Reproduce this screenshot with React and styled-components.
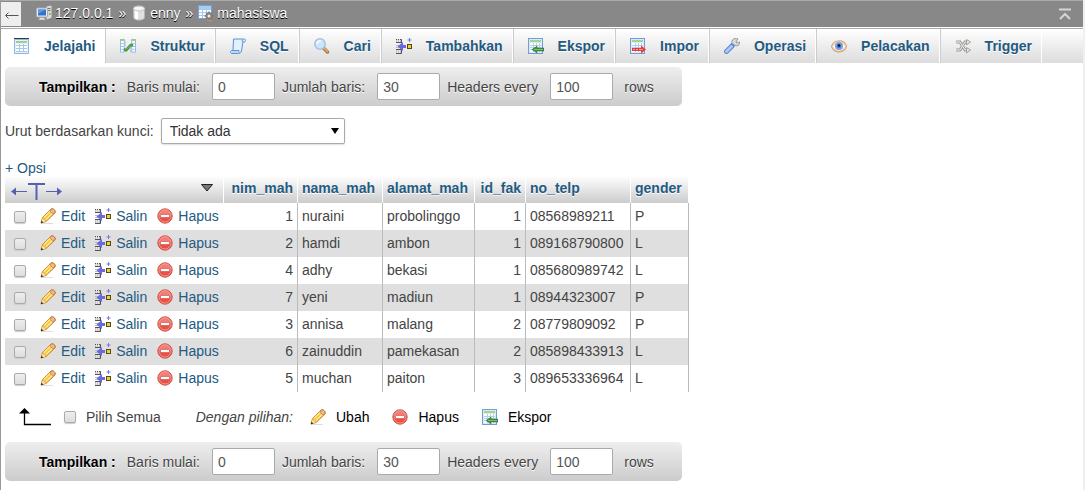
import React from "react";
import styled, { createGlobalStyle } from "styled-components";

const tabs = [
  { title: "Jelajahi", icon: "browse", active: true },
  { title: "Struktur", icon: "structure" },
  { title: "SQL", icon: "sql" },
  { title: "Cari", icon: "search" },
  { title: "Tambahkan", icon: "insert" },
  { title: "Ekspor", icon: "export" },
  { title: "Impor", icon: "import" },
  { title: "Operasi", icon: "wrench" },
  { title: "Pelacakan", icon: "eye" },
  { title: "Trigger", icon: "trigger" },
];

const columns = [
  { name: "nim_mah", width: 74, numeric: true },
  { name: "nama_mah", width: 85 },
  { name: "alamat_mah", width: 92 },
  { name: "id_fak", width: 51, numeric: true },
  { name: "no_telp", width: 105 },
  { name: "gender", width: 58 },
];

const students = [
  ["1", "nuraini", "probolinggo", "1", "08568989211", "P"],
  ["2", "hamdi", "ambon", "1", "089168790800", "L"],
  ["4", "adhy", "bekasi", "1", "085680989742", "L"],
  ["7", "yeni", "madiun", "1", "08944323007", "P"],
  ["3", "annisa", "malang", "2", "08779809092", "P"],
  ["6", "zainuddin", "pamekasan", "2", "085898433913", "L"],
  ["5", "muchan", "paiton", "3", "089653336964", "L"],
];

const sheet = (
  <>
    <rect x="0.5" y="0.5" width="14" height="15" fill="#dbe9f8" stroke="#6f9fd8" />
    <rect x="2" y="2" width="11" height="2" fill="#a5d38c" />
    <path d="M2 5h11v9H2z" fill="#fff" />
    <path d="M2 7.5h11M2 9.5h11M2 11.5h11M5.5 5v9M8.5 5v9M11.5 5v9" stroke="#b4cdea" />
  </>
);

const drawings = {
  server: (
    <>
      <path d="M10 1l5-1 1 1v12l-5 2-1-1z" fill="#d8d8d4" stroke="#777" strokeWidth=".7" />
      <path d="M11.5 3.5h3M11.5 5.5h3" stroke="#777" />
      <path d="M13 8h1.5v2H13z" fill="#68b94c" />
      <rect x="0.5" y="3" width="11" height="9" rx="1" fill="#e9eef5" stroke="#a3abb8" />
      <path d="M2 4.5h8v6H2z" fill="#3670c8" />
      <path d="M2 4.5h8L2 9z" fill="#5f97e0" />
      <path d="M4 12.5h4l1.5 2.5h-7z" fill="#e3e3e3" stroke="#999" strokeWidth=".6" />
    </>
  ),
  database: (
    <>
      <path d="M2.5 3.5v9c0 3.5 11 3.5 11 0v-9z" fill="#e0e0e0" stroke="#b5b5b5" />
      <path d="M4 5v8c1 1 2 1.5 3 1.500V6z" fill="#fff" />
      <ellipse cx="8" cy="3.5" rx="5.5" ry="2.5" fill="#f5f5f5" stroke="#c4c4c4" />
    </>
  ),
  table: (
    <>
      <rect x="0.5" y="0.5" width="13" height="13" fill="#fff" stroke="#73a3dc" />
      <path d="M1 1h12v3H1z" fill="#a9cdf0" />
      <path d="M1 4.5h12M1 7.5h12M1 10.5h12M4.5 4v9M8.500 4v9" stroke="#a8c8ea" />
      <path d="M11 6.500v9M6.500 11h9M8 8l6 6M14 8l-6 6" stroke="#777" strokeWidth="1.500" />
      <circle cx="11" cy="11" r="2.500" fill="#eee" stroke="#808080" strokeWidth="2" />
      <path d="M9 15.500h5" stroke="#dd8b42" />
    </>
  ),
  browse: (
    <>
      <path d="M.5 1.500h14v14H.5z" fill="#e6f0fb" stroke="#8fb5e2" />
      <path d="M0 .5h15" stroke="#303c4a" />
      <path d="M2 3h11v2H2z" fill="#9fd08a" />
      <path d="M2 6h11v8H2z" fill="#fff" />
      <path d="M2 7.500h11M2 10.500h11M2 13.500h11M5.500 6v8M9.500 6v8" stroke="#a8c7e9" />
    </>
  ),
  structure: (
    <>
      <path d="M.5 1.500h4v13h-4zM12.500 1.500h4v13h-4z" fill="#fff" stroke="#8eb8e4" />
      <path d="M0 1.500h5M12 1.500h5" stroke="#98ca83" strokeWidth="2" />
      <path d="M1 5.500h3M1 8.500h3M1 11.500h3M13 5.500h3M13 8.500h3M13 11.500h3" stroke="#9dbfe5" />
      <path d="M4 11.500l2.500 1 5-5.500h2.500" fill="none" stroke="#4f9744" strokeWidth="3" strokeLinejoin="round" />
      <path d="M6.500 12l5-5" stroke="#78bb66" />
      <path d="M5.500 2.500v6M11.500 9v6" stroke="#a6c6e9" />
    </>
  ),
  sql: (
    <>
      <path d="M3.500 1h10c3 0 3 3 .5 3h-1l-1.500 9c-.5 2-1.500 2.500-3 2.500H2c-2 0-2-3 0-3h1z" fill="#d9eafc" stroke="#5f94d3" />
      <path d="M4.500 2h7.500L10.500 12H4z" fill="#e3f0fe" />
      <path d="M13 1.500c-1 .5-1 2 0 2.500M2 12.500h7c-1 1 0 2.500 1 2.500" fill="none" stroke="#5f94d3" />
      <path d="M1.500 14h6" stroke="#9ec0ea" />
    </>
  ),
  search: (
    <>
      <path d="M10 10.500l3.500 3.500" stroke="#a87945" strokeWidth="3.500" strokeLinecap="round" />
      <path d="M10.500 10.500l3 3" stroke="#e1b478" strokeWidth="1.500" strokeLinecap="round" />
      <circle cx="6" cy="6" r="5.200" fill="#cfe4fb" stroke="#a3c1e8" strokeWidth="1.500" />
      <path d="M3 6c0-2 2-3.500 4-3" fill="none" stroke="#fff" strokeWidth="1.500" />
    </>
  ),
  insert: (
    <>
      <path d="M0 1h6v3.500H0zM0 12h6v4H0z" fill="#c4c4c4" />
      <path d="M0 1.500h5.500V5M0 4.500h5.500M0 11.500h5.500v4H0" fill="none" stroke="#555" />
      <path d="M1.500 1v3M3.500 1v3M1.500 12v3M3.500 12v3" stroke="#e8e8e8" />
      <path d="M0 7.500h3M0 9.500h3" stroke="#bbb" />
      <path d="M10 7H7V4L1.500 8.500 7 13v-3h3z" fill="#6b69df" />
      <rect x="11.500" y="6.500" width="4" height="4" fill="#f3ce36" stroke="#544a18" />
      <path d="M13.500 0v4M11.500 2h4" stroke="#7778df" />
    </>
  ),
  export: (
    <>
      {sheet}
      <path d="M16 10H9V8l-5 3.500L9 15v-2h7z" fill="#429043" stroke="#2c6b35" strokeWidth=".5" />
      <path d="M6 11.500h9" stroke="#82bd76" />
    </>
  ),
  import: (
    <>
      {sheet}
      <path d="M2 10h9V7.500l5 4-5 4V13H2z" fill="#e83838" />
      <path d="M3 11.500h2M6 11.500h2M9 11.500h4" stroke="#f0a1a1" />
    </>
  ),
  wrench: (
    <>
      <path d="M14 1l-2 3 1 1 3-1c0 3-3 5-6 3L8 9 6 7l2-2C7 2 10-.5 14 1z" fill="#d8d8d8" stroke="#888" strokeWidth=".8" />
      <path d="M2.500 13.500L8 8" stroke="#5886cf" strokeWidth="5" strokeLinecap="round" />
      <path d="M2.500 13.500L7.500 8.500" stroke="#a8caf5" strokeWidth="3" strokeLinecap="round" />
    </>
  ),
  eye: (
    <>
      <path d="M.5 8.500C3 1 13 1 15.500 8 14 15 3 16 .5 8.500z" fill="#f8e8dc" stroke="#dda881" strokeWidth="1.300" />
      <path d="M1.500 8.500C5 4 12 4 14.500 8.500 11 13 5 13 1.500 8.500z" fill="#fff" stroke="#d9c7bd" strokeWidth=".5" />
      <circle cx="8" cy="8" r="4" fill="#75a3e2" />
      <circle cx="8" cy="8" r="2.200" fill="#4a78c0" />
      <circle cx="8" cy="7.500" r="1.200" fill="#111" />
      <path d="M3 12.500c3 2 7 2 10-.5" fill="none" stroke="#e5a779" />
    </>
  ),
  trigger: (
    <>
      <path
        d="M1 4h4l5 8h3M1 12h4l5-8h3"
        fill="none"
        stroke="#a0a09b"
        strokeWidth="3"
      />
      <path d="M1 4h4l5 8h3M1 12h4l5-8h3" fill="none" stroke="#eeeeea" />
      <path d="M11.500 1.500L15.500 4l-4 3zM11.500 9.500l4 2.500-4 3z" fill="#e6e6e2" stroke="#a0a09b" />
    </>
  ),
  edit: (
    <>
      <path d="M1 15.500h12" stroke="#ddd" />
      <path d="M1 15l1.500-5.500L11 1c1.500-1.500 5.500 1.500 4 4l-9 8.500z" fill="#f5c343" stroke="#c8852f" />
      <path d="M4 9.500l7-7M6 11.500l7-7" stroke="#ffe995" strokeWidth="1.300" />
      <path d="M11 1.500c2-1.500 5 1.500 3.500 3.500L13 6l-3-3z" fill="#efb78d" stroke="#bd7950" strokeWidth=".7" />
      <path d="M1.200 14.800l1.300-4.300 3 3z" fill="#f5dfb8" />
      <path d="M.8 15.200l.7-2.400 1.800 1.700z" fill="#342921" />
    </>
  ),
  remove: (
    <>
      <circle cx="8" cy="8" r="7.200" fill="#e95147" stroke="#d0564e" />
      <path d="M2 7a6 6 0 0 1 12 0c-3 1.500-9 1.500-12 0z" fill="#f27d74" />
      <circle cx="8" cy="8" r="6" fill="none" stroke="#f4a19b" strokeWidth=".8" />
      <rect x="3.500" y="6.500" width="9" height="3" rx=".5" fill="#fff" stroke="#c9463e" strokeWidth=".6" />
    </>
  ),
};

const Icon = ({ name }) => (
  <IconSvg viewBox={name === "structure" ? "0 0 17 16" : "0 0 16 16"} aria-hidden="true">
    {drawings[name]}
  </IconSvg>
);

const RowsBar = ({ id }) => (
  <OptionBar>
    <BarTitle>Tampilkan :</BarTitle>
    <BarLabel htmlFor={`${id}-start`}>Baris mulai:</BarLabel>
    <NumberInput id={`${id}-start`} defaultValue="0" />
    <BarLabel htmlFor={`${id}-count`}>Jumlah baris:</BarLabel>
    <NumberInput id={`${id}-count`} defaultValue="30" />
    <BarLabel htmlFor={`${id}-headers`}>Headers every</BarLabel>
    <NumberInput id={`${id}-headers`} defaultValue="100" />
    <BarSuffix>rows</BarSuffix>
  </OptionBar>
);

const App = () => {
  return (
    <Page>
      <GlobalStyle />
      <TopBar>
        <BackButton aria-label="Kembali">
          <svg width="15" height="10" viewBox="0 0 15 10">
            <path d="M14.500 5.500H2M4.500 2.500l-3 3 3 3" fill="none" stroke="#555" />
          </svg>
        </BackButton>
        <Crumbs>
          <Crumb href="#server">
            <Icon name="server" />
            127.0.0.1
          </Crumb>
          <span>»</span>
          <Crumb href="#enny">
            <Icon name="database" />
            enny
          </Crumb>
          <span>»</span>
          <Crumb href="#mahasiswa">
            <Icon name="table" />
            mahasiswa
          </Crumb>
        </Crumbs>
        <TopButton aria-label="Ke atas">
          <svg width="14" height="12" viewBox="0 0 14 12">
            <path d="M1 1.500h12M2 11l5-5 5 5" fill="none" stroke="#d5d5d5" strokeWidth="2" />
          </svg>
        </TopButton>
      </TopBar>
      <TabList>
        {tabs.map((tab) => (
          <Tab key={tab.title} href={`#${tab.icon}`} $active={tab.active}>
            <Icon name={tab.icon} />
            {tab.title}
          </Tab>
        ))}
      </TabList>
      <Content>
        <RowsBar id="top" />
        <SortRow>
          <label htmlFor="sort-key">Urut berdasarkan kunci:</label>
          <SelectBox>
            <Select id="sort-key">
              <option>Tidak ada</option>
            </Select>
          </SelectBox>
        </SortRow>
        <OptionsLink href="#opsi">+ Opsi</OptionsLink>
        <Table>
          <colgroup>
            <Col $width={219} />
            {columns.map((column) => (
              <Col key={column.name} $width={column.width} />
            ))}
          </colgroup>
          <thead>
            <tr>
              <HeadCell>
                <HeadTools>
                  <svg width="52" height="18" viewBox="0 0 52 18" aria-hidden="true">
                    <path d="M2 9.500h14M35 9.500h14" stroke="#5560b4" />
                    <path d="M17 2h17" stroke="#5560b4" strokeWidth="2" />
                    <path d="M25.500 2v16" stroke="#5560b4" strokeWidth="2" />
                    <path d="M0 9.500l5-4v8zM51 9.500l-5-4v8z" fill="#5560b4" />
                  </svg>
                  <svg width="14" height="18" viewBox="0 0 14 18" aria-hidden="true">
                    <path d="M1.500 2.500h11L7 9z" fill="#777" stroke="#222" />
                  </svg>
                </HeadTools>
              </HeadCell>
              {columns.map((column) => (
                <HeadCell key={column.name} $numeric={column.numeric}>
                  <HeadLink href={`#${column.name}`}>{column.name}</HeadLink>
                </HeadCell>
              ))}
            </tr>
          </thead>
          <tbody>
            {students.map((row) => (
              <Row key={row[0]}>
                <Cell $plain>
                  <Actions>
                    <Checkbox aria-label={`Pilih ${row[1]}`} />
                    <Action href="#edit">
                      <Icon name="edit" />
                      Edit
                    </Action>
                    <Action href="#salin">
                      <Icon name="insert" />
                      Salin
                    </Action>
                    <Action href="#hapus">
                      <Icon name="remove" />
                      Hapus
                    </Action>
                  </Actions>
                </Cell>
                {columns.map((column, index) => (
                  <Cell key={column.name} $numeric={column.numeric}>
                    {row[index]}
                  </Cell>
                ))}
              </Row>
            ))}
          </tbody>
        </Table>
        <Footer>
          <svg width="32" height="18" viewBox="0 0 32 18" aria-hidden="true">
            <path d="M5.500 3v13.500H32" fill="none" stroke="#000" strokeWidth="1.300" />
            <path d="M0 5.500L5.500 0 11 5.500z" fill="#000" />
          </svg>
          <CheckAll>
            <Checkbox />
            Pilih Semua
          </CheckAll>
          <Hint>Dengan pilihan:</Hint>
          <BulkButton>
            <Icon name="edit" />
            Ubah
          </BulkButton>
          <BulkButton>
            <Icon name="remove" />
            Hapus
          </BulkButton>
          <BulkButton>
            <Icon name="export" />
            Ekspor
          </BulkButton>
        </Footer>
        <RowsBar id="bottom" />
      </Content>
    </Page>
  );
};

const GlobalStyle = createGlobalStyle`
  * {
    box-sizing: border-box;
  }
  body {
    margin: 0;
    background: #fff;
    color: #444;
    font-family: "Liberation Sans", Arial, sans-serif;
    font-size: 14px;
    line-height: 16px;
  }
  a {
    color: #235a81;
    text-decoration: none;
  }
  button,
  input,
  select {
    font: inherit;
  }
  svg {
    display: block;
    flex: none;
  }
`;

const Page = styled.div`
  min-height: 100vh;
  border-left: 1px solid #999;
  border-right: 2px solid #f0f0f0;
`;

const IconSvg = styled.svg`
  width: 16px;
  height: 16px;
`;

const TopBar = styled.header`
  display: flex;
  height: 27px;
  border-top: 1px solid #aaa;
  background: #888;
`;

const BackButton = styled.button`
  display: flex;
  align-items: center;
  justify-content: center;
  width: 20px;
  margin: 1px 0;
  padding: 2px 0 0;
  border: 0;
  background: #eee;
`;

const Crumbs = styled.nav`
  display: flex;
  flex: 1;
  align-items: center;
  gap: 5px;
  padding-bottom: 2px;
  margin-left: 15px;
  color: #fff;
  text-shadow: 0 1px 0 #000;
`;

const Crumb = styled.a`
  display: flex;
  align-items: center;
  gap: 3px;
  color: #fff;
`;

const TopButton = styled.button`
  display: flex;
  align-items: center;
  padding: 0 11px;
  border: 0;
  background: none;
`;

const TabList = styled.nav`
  display: flex;
  height: 35px;
  margin-top: 1px;
  border-top: 1px solid #aaa;
  background: linear-gradient(#fff, #dcdcdc);
`;

const Tab = styled.a`
  display: flex;
  align-items: center;
  gap: 14px;
  padding: 0 9px 0 13px;
  border-left: ${(props) => (props.$active ? "0" : "1px solid #ccc")};
  border-right: 1px solid #fff;
  background: ${(props) => (props.$active ? "#fff" : "none")};
  font-weight: bold;
  text-shadow: 0 1px 0 #fff;
  &:not(:first-child) {
    padding-left: 14px;
  }
`;

const Content = styled.main`
  padding: 4px;
`;

const OptionBar = styled.div`
  display: flex;
  align-items: center;
  width: fit-content;
  height: 39px;
  padding: 0 28px 0 34px;
  border-radius: 5px;
  background: linear-gradient(#eee, #ccc);
  text-shadow: 0 1px 0 #fff;
`;

const BarTitle = styled.strong`
  margin-right: 11px;
  color: #000;
`;

const BarLabel = styled.label`
  margin-right: 12px;
`;

const NumberInput = styled.input`
  width: 63px;
  height: 27px;
  margin-right: 7px;
  padding: 0 5px;
  border: 1px solid #aaa;
  border-radius: 2px;
  background: #fff;
  color: #555;
`;

const BarSuffix = styled.span`
  margin-left: 4px;
`;

const SortRow = styled.div`
  display: flex;
  align-items: center;
  gap: 7px;
  margin-top: 12px;
`;

const SelectBox = styled.div`
  position: relative;
  &::after {
    content: "";
    position: absolute;
    top: 10px;
    right: 6px;
    border: 4px solid transparent;
    border-top: 6px solid #000;
    border-bottom: 0;
    pointer-events: none;
  }
`;

const Select = styled.select`
  appearance: none;
  width: 184px;
  height: 26px;
  padding: 0 8px;
  border: 1px solid #aaa;
  border-radius: 2px;
  background: #fff;
  box-shadow: 0 1px 2px #ddd;
  color: #333;
`;

const OptionsLink = styled.a`
  display: block;
  width: fit-content;
  margin-top: 16px;
`;

const Table = styled.table`
  table-layout: fixed;
  width: 684px;
  border-collapse: separate;
  border-spacing: 0;
`;

const Col = styled.col`
  width: ${(props) => props.$width}px;
`;

const HeadCell = styled.th`
  height: 27px;
  padding: 0 4px;
  border-right: 1px solid #fff;
  background: linear-gradient(#fff, #ccc);
  text-align: ${(props) => (props.$numeric ? "right" : "left")};
  text-shadow: 0 1px 0 #fff;
`;

const HeadTools = styled.div`
  display: flex;
  justify-content: space-between;
  padding: 2px 5px 0 2px;
`;

const HeadLink = styled.a`
  display: block;
  padding-bottom: 4px;
`;

const Row = styled.tr`
  &:nth-child(even) {
    background: #dfdfdf;
  }
`;

const Cell = styled.td`
  height: 27px;
  padding: 0 4px ${(props) => (props.$plain ? "0" : "2px")};
  border-right: 1px solid ${(props) => (props.$plain ? "transparent" : "#bbb")};
  text-align: ${(props) => (props.$numeric ? "right" : "left")};
`;

const Actions = styled.div`
  display: flex;
  align-items: center;
  gap: 10px;
  padding-left: 5px;
`;

const Action = styled.a`
  display: flex;
  align-items: center;
  gap: 5px;
  line-height: 14px;
  padding-bottom: 1px;
`;

const Checkbox = styled.input.attrs({ type: "checkbox" })`
  appearance: none;
  width: 12px;
  height: 12px;
  margin: 0 4px 0 0;
  border: 1px solid #aaa;
  border-radius: 2px;
  background: linear-gradient(#eee, #ddd);
  box-shadow: 0 1px 1px #ccc;
  &:checked {
    background: #235a81;
  }
`;

const Footer = styled.div`
  display: flex;
  align-items: center;
  height: 50px;
  padding-left: 14px;
`;

const CheckAll = styled.label`
  display: flex;
  align-items: center;
  gap: 6px;
  margin-left: 13px;
`;

const Hint = styled.em`
  margin: 0 17px 0 35px;
`;

const BulkButton = styled.button`
  display: flex;
  align-items: center;
  gap: 10px;
  margin-right: 23px;
  padding: 0;
  border: 0;
  background: none;
  color: #000;
`;

export default App;
